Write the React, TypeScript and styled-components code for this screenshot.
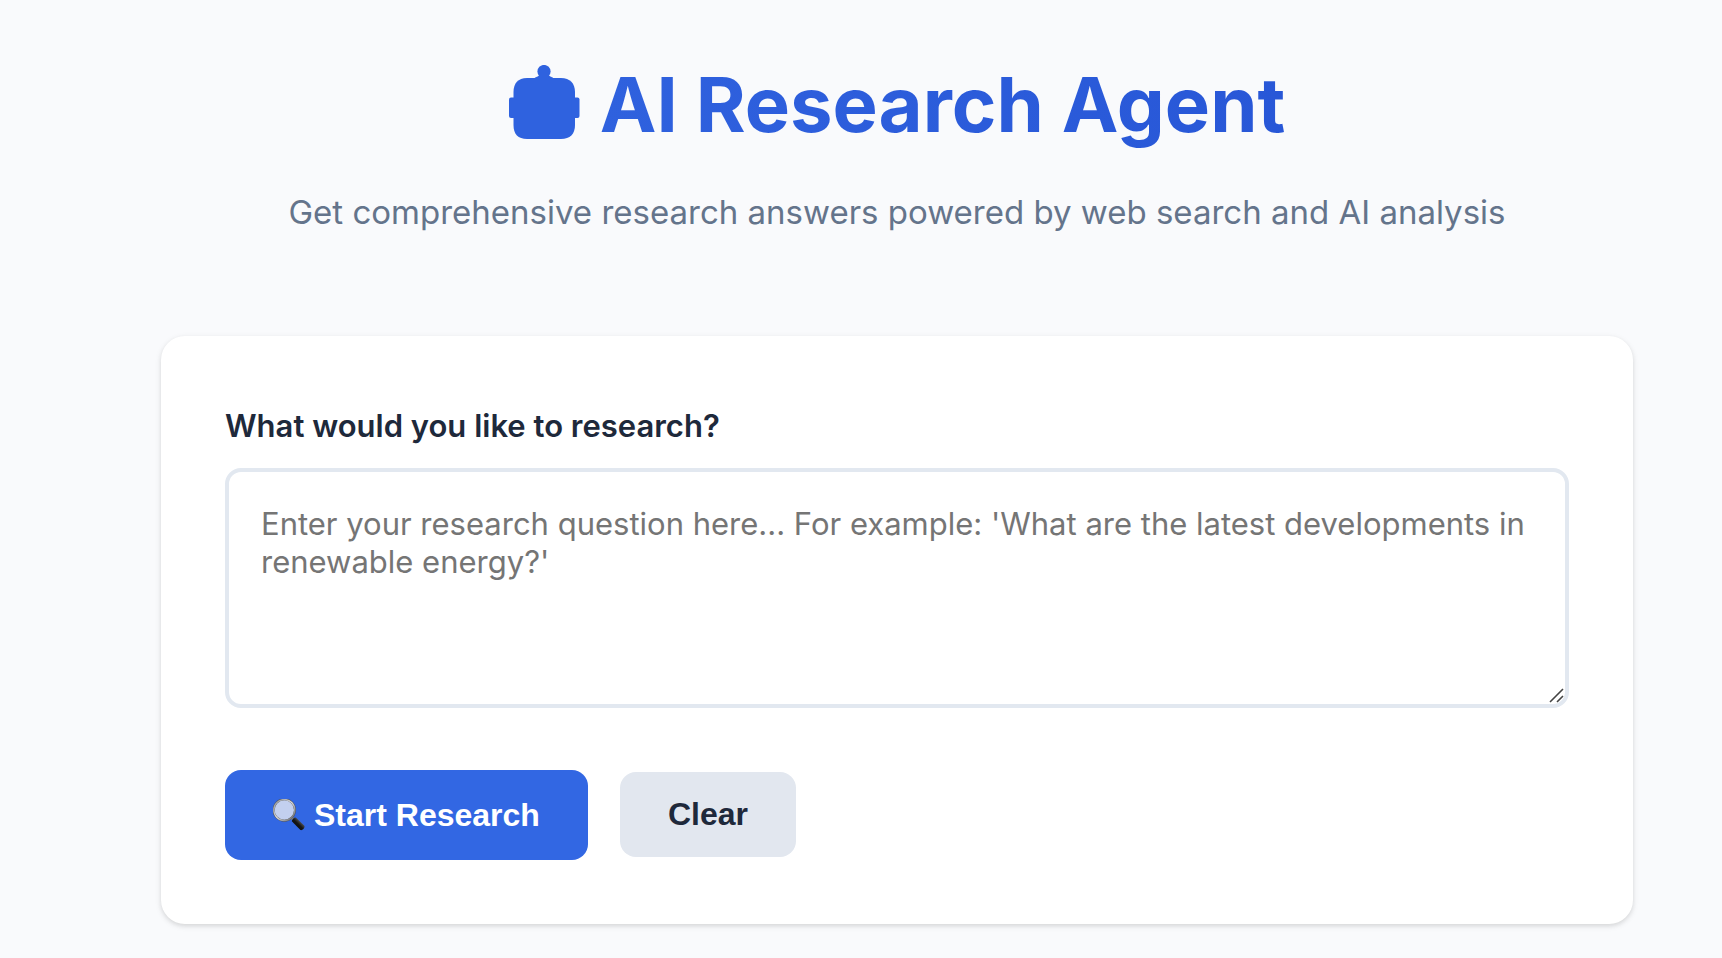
import React, { useState } from "react";
import styled, { createGlobalStyle } from "styled-components";

const GlobalStyle = createGlobalStyle`
  * { box-sizing: border-box; }
  body {
    margin: 0;
    background: #f9fafc;
    color: #1e293b;
    font-family: Inter, "Liberation Sans", sans-serif;
  }
`;

const Page = styled.main`
  padding: 54px 89px 34px 161px;
`;

const Header = styled.header`
  text-align: center;
  margin-bottom: 98px;
`;

const Title = styled.h1`
  display: flex;
  justify-content: center;
  align-items: center;
  gap: 20px;
  margin: 0 0 32px;
  font-size: 76px;
  line-height: 100px;
  font-weight: 700;
`;

const TitleText = styled.span`
  color: transparent;
  background: linear-gradient(90deg, #2f61de, #2857d7);
  background-clip: text;
`;

const RobotIcon = styled.svg`
  width: 71px;
  height: 74px;
  flex: none;
  margin-bottom: 4px;
  fill: #2f62df;
`;

const Subtitle = styled.p`
  margin: 0;
  font-size: 33px;
  line-height: 52px;
  color: #64748b;
`;

const Card = styled.form`
  background: #fff;
  border-radius: 24px;
  padding: 64px;
  box-shadow: 0 2px 6px rgba(0, 0, 0, 0.1), 0 2px 4px rgba(0, 0, 0, 0.06);
`;

const Label = styled.label`
  display: block;
  margin-bottom: 16px;
  font-size: 31px;
  line-height: 52px;
  font-weight: 600;
`;

const Field = styled.div`
  position: relative;
  margin-bottom: 62px;
`;

const Question = styled.textarea`
  display: block;
  width: 100%;
  height: 240px;
  padding: 33px 32px 32px;
  border: 4px solid #e2e8f0;
  border-radius: 16px;
  background: #fff;
  color: inherit;
  font-family: inherit;
  font-size: 31px;
  line-height: 38px;
  resize: none;
  outline: none;
  &::placeholder { color: #757575; }
  &:focus-visible { border-color: #2563eb; }
`;

const Grip = styled.svg`
  position: absolute;
  right: 5px;
  bottom: 5px;
  width: 15px;
  height: 15px;
  pointer-events: none;
`;

const Actions = styled.div`
  display: flex;
  align-items: center;
  gap: 32px;
`;

const Button = styled.button<{ $primary?: boolean }>`
  display: flex;
  align-items: center;
  gap: 9px;
  margin: ${(p) => (p.$primary ? "0" : "0 0 2px")};
  padding: ${(p) => (p.$primary ? "27px 48px" : "24px 48px 25px")};
  border: 0;
  border-radius: 16px;
  background: ${(p) => (p.$primary ? "#3267e3" : "#e2e7ef")};
  color: ${(p) => (p.$primary ? "#fff" : "#1e293b")};
  font-family: "Liberation Sans", Arial, sans-serif;
  font-size: 32px;
  line-height: 36px;
  font-weight: 700;
  cursor: pointer;
`;

const SearchIcon = styled.svg`
  width: 32px;
  height: 32px;
  flex: none;
`;

export default function App() {
  const [question, setQuestion] = useState("");
  return (
    <>
      <GlobalStyle />
      <Page>
        <Header>
          <Title>
            <RobotIcon viewBox="0 0 71 74" aria-hidden="true">
              <circle cx="35" cy="6.5" r="6.6" />
              <path d="M30 10h10c0 2 4 1.500 5 4H25c1-2.500 5-2 5-4z" />
              <path d="M18 13H52C61 13 66 18.500 66 27V60C66 69 61 74 52 74H18C9 74 4.500 69 4.500 60V27C4.500 18.500 9 13 18 13Z" />
              <rect y="32.500" width="8" height="20.500" rx="2" />
              <rect x="62.500" y="32.500" width="8" height="20.500" rx="2" />
            </RobotIcon>
            <TitleText>AI Research Agent</TitleText>
          </Title>
          <Subtitle>
            Get comprehensive research answers powered by web search and AI analysis
          </Subtitle>
        </Header>
        <Card onSubmit={(e) => e.preventDefault()}>
          <Label htmlFor="question">What would you like to research?</Label>
          <Field>
            <Question
              id="question"
              value={question}
              onChange={(e) => setQuestion(e.target.value)}
              placeholder="Enter your research question here... For example: 'What are the latest developments in renewable energy?'"
            />
            <Grip viewBox="0 0 15 15" aria-hidden="true">
              <path d="M1 14 14 1M8 14l6-6" fill="none" stroke="#444" strokeWidth="1.6" />
            </Grip>
          </Field>
          <Actions>
            <Button type="submit" $primary>
              <SearchIcon viewBox="0 0 32 32" aria-hidden="true">
                <defs>
                  <linearGradient id="rim" x1="0" y1="0" x2="1" y2="1">
                    <stop offset="0" stopColor="#8b8d91" />
                    <stop offset="0.5" stopColor="#d9dadc" />
                    <stop offset="1" stopColor="#5c5d60" />
                  </linearGradient>
                  <linearGradient id="handle" x1="0" y1="1" x2="1" y2="0">
                    <stop offset="0" stopColor="#000" />
                    <stop offset="0.5" stopColor="#161616" />
                    <stop offset="0.75" stopColor="#666" />
                    <stop offset="1" stopColor="#111" />
                  </linearGradient>
                </defs>
                <path d="M18 18l4 4" stroke="#8d8f92" strokeWidth="2.500" />
                <path d="M18.800 22.200c0-1.700 2.200-3.900 4-3.600l8.600 8.200c.9 2-2 5-4 4.200z" fill="url(#handle)" />
                <circle cx="11.300" cy="11" r="10.700" fill="#c3d0ef" stroke="#505359" strokeWidth="2" />
                <circle cx="11.300" cy="11" r="10.500" fill="none" stroke="url(#rim)" strokeWidth="1.300" />
              </SearchIcon>
              Start Research
            </Button>
            <Button type="button" onClick={() => setQuestion("")}>
              Clear
            </Button>
          </Actions>
        </Card>
      </Page>
    </>
  );
}
